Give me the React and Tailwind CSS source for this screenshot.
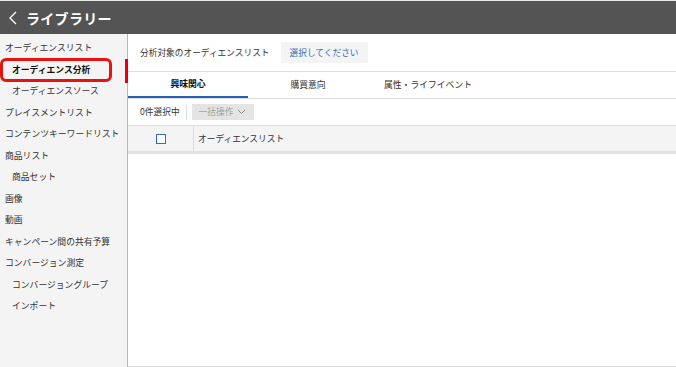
import React from 'react';

const font = { fontFamily: '"Noto Sans CJK JP", "Noto Sans", sans-serif' };

const sideItems = [
  { label: 'オーディエンスリスト', indent: false },
  { label: 'オーディエンス分析', indent: true, active: true },
  { label: 'オーディエンスソース', indent: true },
  { label: 'プレイスメントリスト', indent: false },
  { label: 'コンテンツキーワードリスト', indent: false },
  { label: '商品リスト', indent: false },
  { label: '商品セット', indent: true },
  { label: '画像', indent: false },
  { label: '動画', indent: false },
  { label: 'キャンペーン間の共有予算', indent: false },
  { label: 'コンバージョン測定', indent: false },
  { label: 'コンバージョングループ', indent: true },
  { label: 'インポート', indent: true },
];

const tabs = ['興味関心', '購買意向', '属性・ライフイベント'];

export default function App() {
  return (
    <div className="w-[676px] h-[367px] flex flex-col bg-white overflow-hidden" style={font}>
      <div className="h-px bg-[#e6e6e6]" />
      {/* header */}
      <div className="h-[33px] bg-[#545454] flex items-center pl-[8px] gap-[8px] shrink-0">
        <svg width="10" height="14" viewBox="0 0 10 14" fill="none">
          <polyline points="8,1 2,7 8,13" stroke="#fff" strokeWidth="1.4" />
        </svg>
        <span className="text-white text-[14px] font-bold leading-none tracking-[0.3px]">ライブラリー</span>
      </div>

      <div className="flex flex-1 min-h-0">
        {/* sidebar */}
        <div className="w-[128px] shrink-0 bg-[#f4f4f4] border-r border-[#b8b8b8] pt-[3px]">
          {sideItems.map((item) => (
            <div
              key={item.label}
              className={`relative h-[21.5px] flex items-center text-[8.8px] whitespace-nowrap ${item.indent ? 'pl-[12px]' : 'pl-[5px]'} ${item.active ? 'font-bold text-[#111]' : 'text-[#333]'}`}
            >
              {item.label}
              {item.active && (
                <>
                  <div className="absolute left-[0px] top-[-1px] w-[112px] h-[24px] border-[3px] border-[#e8130f] rounded-[6px]" />
                  <div className="absolute right-[-1px] top-0 w-[3px] h-[24px] bg-[#e60012]" />
                </>
              )}
            </div>
          ))}
        </div>

        {/* main */}
        <div className="flex-1 flex flex-col border-b border-[#dcdcdc]">
          <div className="h-[38px] shrink-0 flex items-center pl-[12px] border-b border-[#dedede]">
            <span className="text-[8.7px] text-[#333]">分析対象のオーディエンスリスト</span>
            <button className="ml-[11px] h-[21px] px-[9px] bg-[#f4f4f4] text-[8.7px] text-[#3a6cb0]">選択してください</button>
          </div>

          <div className="h-[27px] shrink-0 flex border-b border-[#dedede]">
            {tabs.map((t, i) => (
              <div
                key={t}
                className={`w-[120px] flex items-center justify-center text-[8.8px] ${i === 0 ? 'font-bold text-[#111] border-b-2 border-[#2361b5]' : 'text-[#333]'}`}
              >
                {t}
              </div>
            ))}
          </div>

          <div className="h-[27px] shrink-0 flex items-center pl-[12px] border-b border-[#dedede]">
            <span className="text-[8.7px] text-[#333]">0件選択中</span>
            <div className="w-px h-[15px] bg-[#dcdcdc] ml-[6px] mr-[5px]" />
            <div className="h-[16px] w-[62px] bg-[#e4e4e4] flex items-center pl-[7px] gap-[4px] text-[8.7px] text-[#a0a0a0]">
              一括操作
              <svg width="9" height="6" viewBox="0 0 9 6" fill="none">
                <polyline points="1,1 4.5,4.5 8,1" stroke="#8a8a8a" strokeWidth="1" />
              </svg>
            </div>
          </div>

          <div className="h-[28px] shrink-0 flex bg-[#f4f4f4] border-b-[3px] border-[#e2e2e2]">
            <div className="w-[66px] flex items-center justify-center border-r border-[#dedede]">
              <div className="w-[10px] h-[10px] border border-[#2f6bc2] bg-white" />
            </div>
            <div className="flex items-center pl-[4px] text-[8.7px] text-[#333]">オーディエンスリスト</div>
          </div>

          <div className="flex-1" />
        </div>
      </div>
    </div>
  );
}
